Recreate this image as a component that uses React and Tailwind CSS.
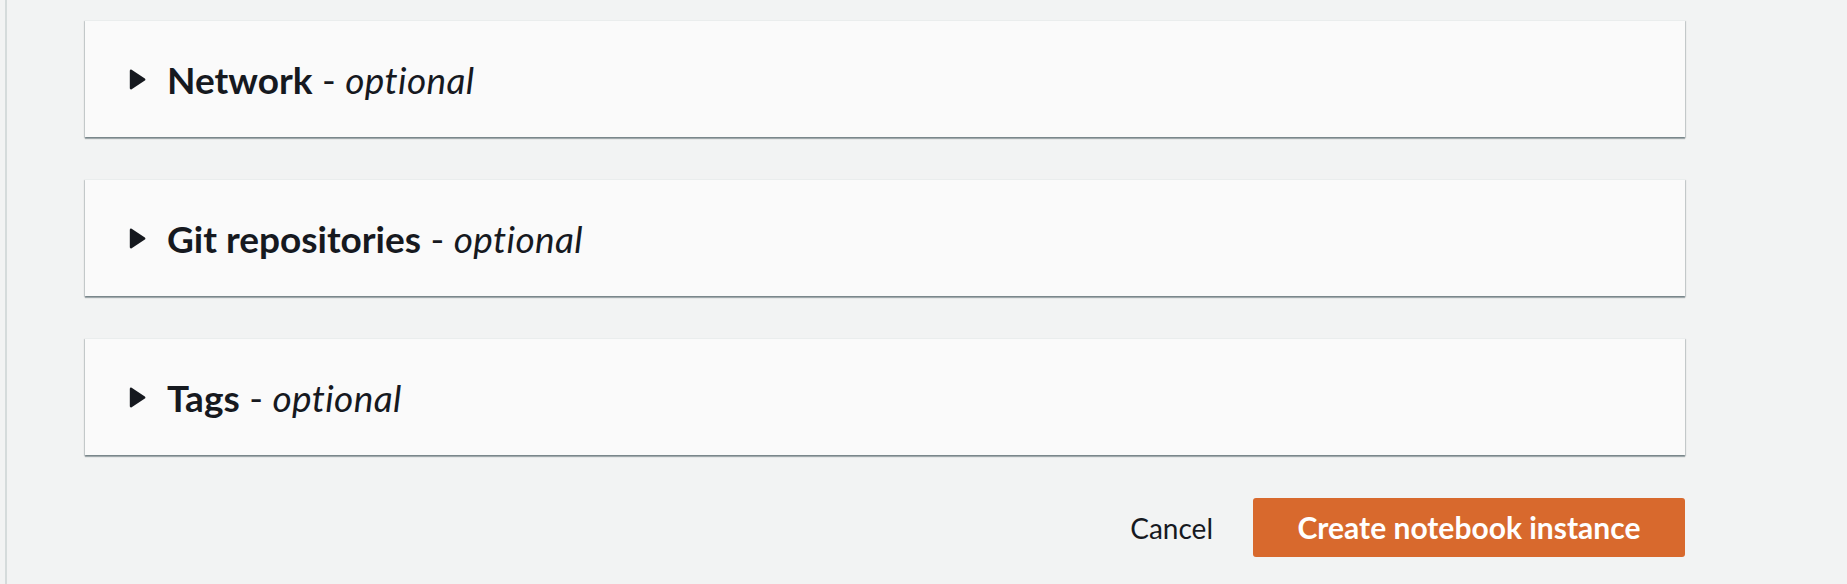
const sections = [
  { title: "Network" },
  { title: "Git repositories" },
  { title: "Tags" },
];

function Caret() {
  return (
    <svg width="17" height="21" viewBox="0 0 17 21" className="shrink-0">
      <path d="M2 1.8 L15.2 10.5 L2 19.2 Z" fill="#16191f" stroke="#16191f" strokeWidth="2.4" strokeLinejoin="round" />
    </svg>
  );
}

function Section({ title }) {
  return (
    <section className="flex h-[117px] items-center gap-[21px] border-t border-[#eaeded] bg-[#fafafa] pl-[44px] shadow-[0_2px_1px_0_rgba(0,28,36,0.3),1px_1px_1px_0_rgba(0,28,36,0.15),-1px_1px_1px_0_rgba(0,28,36,0.15)]">
      <Caret />
      <h2 className="text-[37px] leading-none text-[#16191f]">
        <span className="font-bold">{title}</span>
        <span className="font-normal"> - </span>
        <span className="italic tracking-[0.01em]">optional</span>
      </h2>
    </section>
  );
}

export default function App() {
  return (
    <div className="flex h-[584px] w-full bg-[#f2f3f3] font-['Lato',sans-serif]">
      <div className="ml-[5px] w-[2px] bg-[#d5dbdb]" />
      <main className="ml-[78px] w-[1600px] pt-[20px]">
        <div className="flex flex-col gap-[42px]">
          {sections.map((s) => (
            <Section key={s.title} title={s.title} />
          ))}
        </div>
        <div className="mt-[43px] flex items-center justify-end gap-[40px]">
          <button type="button" className="text-[28px] text-[#16191f]">
            Cancel
          </button>
          <button
            type="button"
            className="h-[59px] w-[432px] rounded-[3px] bg-[#d8692d] text-[30px] font-bold text-white"
          >
            Create notebook instance
          </button>
        </div>
      </main>
    </div>
  );
}
